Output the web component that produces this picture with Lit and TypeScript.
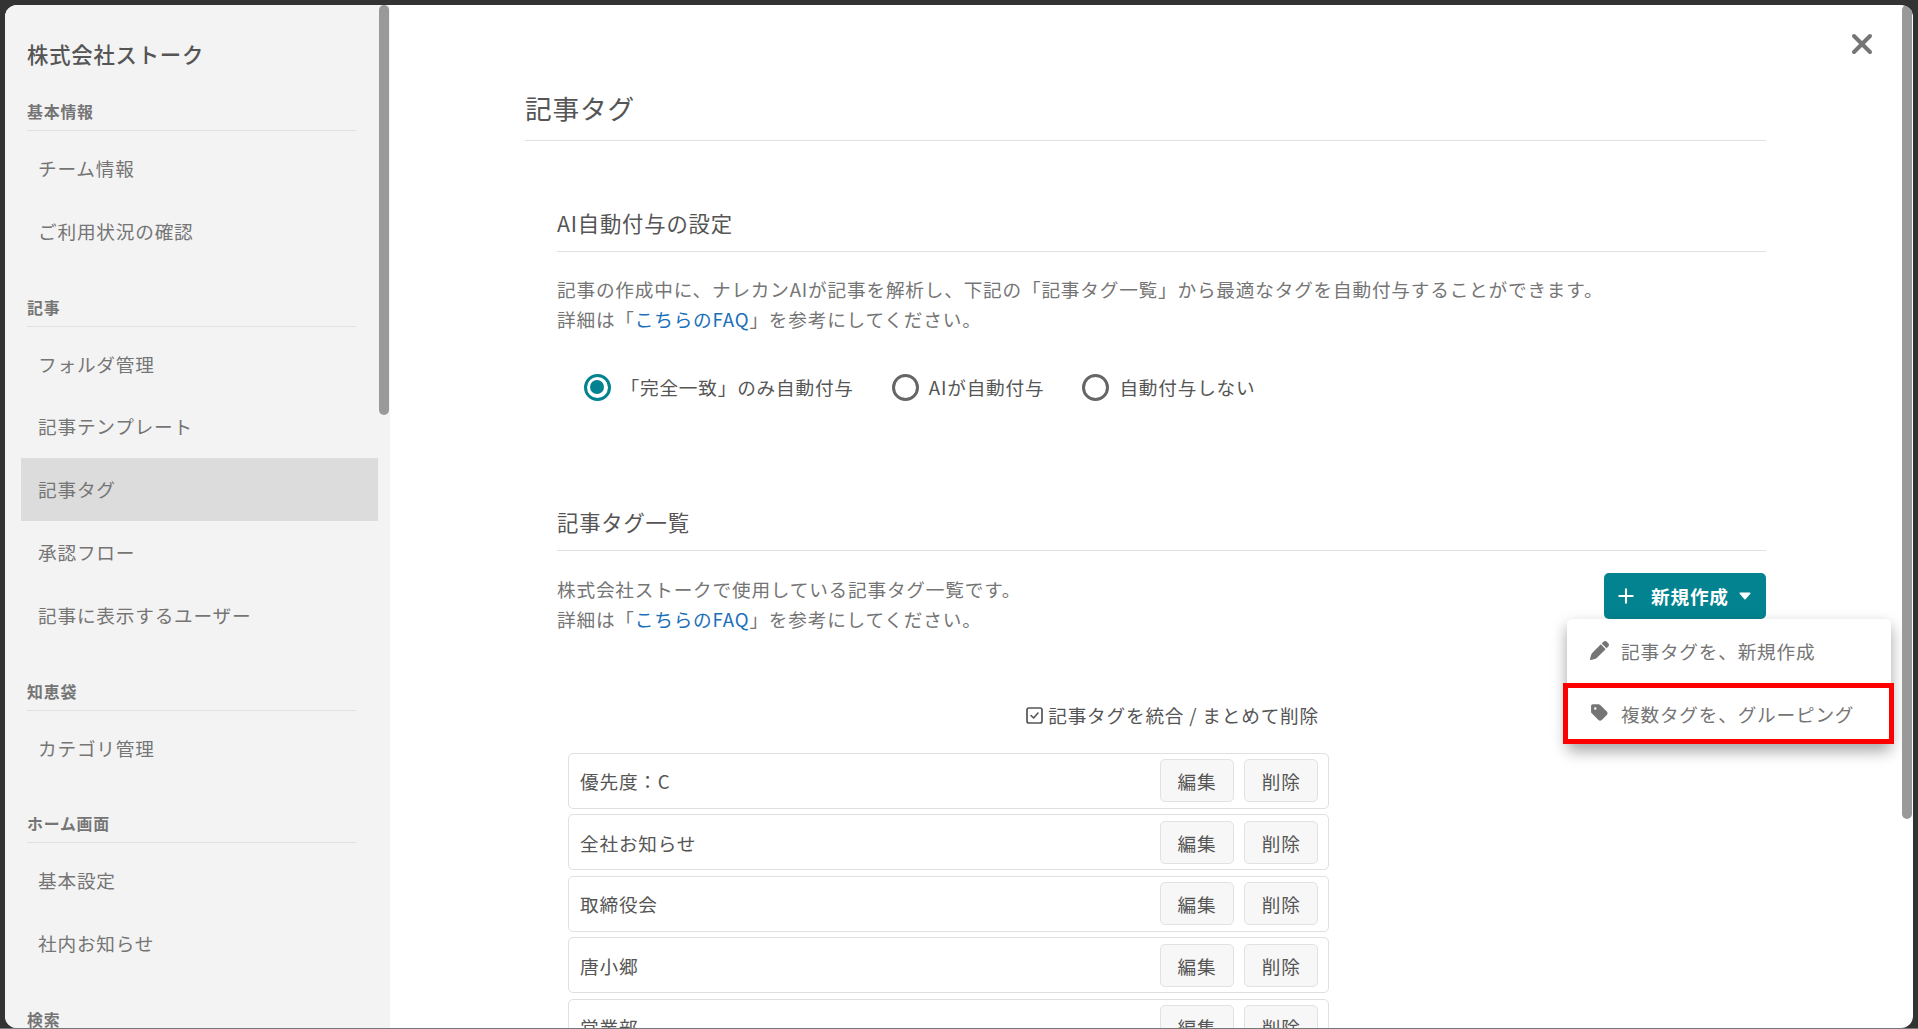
import { LitElement, html, css } from "lit";
import { customElement, property } from "lit/decorators.js";
import { classMap } from "lit/directives/class-map.js";

const NAV = [
  { title: "基本情報", items: ["チーム情報", "ご利用状況の確認"] },
  {
    title: "記事",
    items: ["フォルダ管理", "記事テンプレート", "記事タグ", "承認フロー", "記事に表示するユーザー"],
  },
  { title: "知恵袋", items: ["カテゴリ管理"] },
  { title: "ホーム画面", items: ["基本設定", "社内お知らせ"] },
  { title: "検索", items: [] as string[] },
];

const TAGS = ["優先度：C", "全社お知らせ", "取締役会", "唐小郷", "営業部"];
const RADIOS = ["「完全一致」のみ自動付与", "AIが自動付与", "自動付与しない"];

@customElement("side-nav")
export class SideNav extends LitElement {
  @property() current = "";

  static styles = css`
    :host {
      display: block;
      position: relative;
      flex: 0 0 385px;
      box-sizing: border-box;
      background: #f3f3f3;
      color: #757575;
      overflow: hidden;
    }
    .company {
      margin: 30px 0 0 22px;
      font-size: 21.35px;
      line-height: 38px;
      font-weight: 500;
      color: #555;
    }
    .group {
      margin-top: 32px;
    }
    .group.first {
      margin-top: 26px;
    }
    .group-title {
      margin: 0 34px 6px 22px;
      padding-bottom: 6px;
      border-bottom: 1px solid #e0e0e0;
      font-size: 15.9px;
      line-height: 25px;
      font-weight: 700;
    }
    .item {
      height: 62.8px;
      margin: 0 12px 0 16px;
      padding-left: 17px;
      box-sizing: border-box;
      font-size: 18.65px;
      line-height: 62px;
    }
    .item.active {
      background: #dcdcdc;
    }
    .thumb {
      position: absolute;
      top: 0;
      right: 1px;
      width: 10px;
      height: 410px;
      border-radius: 5px;
      background: #999;
    }
  `;

  render() {
    return html`
      <div class="company">株式会社ストーク</div>
      ${NAV.map(
        (g, i) => html`
          <div class=${classMap({ group: true, first: i === 0 })}>
            <div class="group-title">${g.title}</div>
            ${g.items.map(
              (t) => html`<div class=${classMap({ item: true, active: t === this.current })}>${t}</div>`
            )}
          </div>
        `
      )}
      <div class="thumb"></div>
    `;
  }
}

@customElement("create-menu")
export class CreateMenu extends LitElement {
  static styles = css`
    :host {
      display: block;
      position: relative;
      flex: none;
    }
    .button {
      display: flex;
      align-items: center;
      width: 162px;
      height: 46px;
      padding-left: 14px;
      box-sizing: border-box;
      border-radius: 5px;
      background: #02838f;
      color: #fff;
      font-size: 18.65px;
      font-weight: 700;
      line-height: 44px;
    }
    .plus {
      width: 16px;
      height: 16px;
      margin-right: 17px;
    }
    .caret {
      width: 12px;
      height: 8px;
      margin: 0 0 0 10px;
    }
    .menu {
      position: absolute;
      top: 46px;
      left: -37px;
      width: 324px;
      height: 125px;
      border-radius: 5px;
      background: #fff;
      box-shadow: 0 7px 15px rgba(0, 0, 0, 0.36);
      color: #757575;
      font-size: 18.65px;
    }
    .entry {
      display: flex;
      align-items: center;
      height: 63px;
      padding-left: 23px;
    }
    .icon {
      display: flex;
      width: 20px;
      margin-right: 11px;
    }
    .pen {
      width: 19px;
      height: 19px;
    }
    .tag {
      width: 17px;
      height: 19.3px;
      margin: 0 0 2px 1px;
    }
    .highlight {
      position: absolute;
      left: -4px;
      top: 64px;
      width: 331px;
      height: 61px;
      box-sizing: border-box;
      border: 5.5px solid #f00;
    }
  `;

  render() {
    return html`
      <div class="button">
        <svg class="plus" viewBox="0 0 16 16">
          <path d="M8 1.300V14.700M1.300 8H14.700" stroke="#fff" stroke-width="2.100" stroke-linecap="round" />
        </svg>
        <span>新規作成</span>
        <svg class="caret" viewBox="0 0 12 8">
          <path d="M1.300 1.200H10.700L6 6.600Z" fill="#fff" stroke="#fff" stroke-width="1.600" stroke-linejoin="round" />
        </svg>
      </div>
      <div class="menu">
        <div class="entry">
          <span class="icon">
            <svg class="pen" viewBox="0 0 512 512" fill="currentColor">
              <path
                d="M410.3 231l11.3-11.3-33.9-33.9-62.1-62.1L291.7 89.8l-11.3 11.3-22.6 22.6L58.6 322.9c-10.4 10.4-18 23.3-22.2 37.4L1 480.7c-2.5 8.4-.2 17.5 6.1 23.7s15.3 8.5 23.7 6.1l120.300-35.400c14.100-4.200 27-11.800 37.400-22.200L387.700 253.700 410.300 231z"
              />
              <path
                d="M362.700 18.700L348.300 33.200 325.700 55.800 314.300 67.100l33.900 33.900 62.100 62.100 33.900 33.900 11.300-11.300 22.600-22.600 14.500-14.500c25-25 25-65.500 0-90.500L453.300 18.700c-25-25-65.500-25-90.500 0z"
              />
            </svg>
          </span>
          <span>記事タグを、新規作成</span>
        </div>
        <div class="entry">
          <span class="icon">
            <svg class="tag" viewBox="0 0 448 512" fill="currentColor">
              <path
                d="M0 80V229.500c0 17 6.700 33.300 18.700 45.300l176 176c25 25 65.500 25 90.500 0L418.700 317.300c25-25 25-65.500 0-90.500l-176-176c-12-12-28.300-18.700-45.300-18.700H48C21.500 32 0 53.500 0 80zm112 32a32 32 0 1 1 0 64 32 32 0 1 1 0-64z"
              />
            </svg>
          </span>
          <span>複数タグを、グルーピング</span>
        </div>
        <div class="highlight"></div>
      </div>
    `;
  }
}

@customElement("app-root")
export class AppRoot extends LitElement {
  static styles = css`
    :host {
      display: block;
      width: 1918px;
      height: 1029px;
      box-sizing: border-box;
      padding: 5px 5px 0;
      background: #333;
      border-bottom: 1px solid #777;
      overflow: hidden;
      font-family: "Noto Sans CJK JP", sans-serif;
      letter-spacing: 0.05em;
      white-space: nowrap;
    }
    .modal {
      display: flex;
      height: 1023px;
      border-radius: 12px;
      overflow: hidden;
      background: #fff;
    }
    main {
      position: relative;
      flex: 1;
      min-width: 0;
      padding: 80px 147px 0 135px;
      color: #555;
    }
    .page-title {
      margin: 0;
      padding-bottom: 10px;
      border-bottom: 1px solid #e0e0e0;
      font-size: 26.7px;
      font-weight: 400;
      line-height: 45px;
    }
    section {
      margin-left: 32px;
    }
    .auto {
      height: 299px;
      padding-top: 64px;
    }
    h2 {
      margin: 0;
      padding-bottom: 10px;
      border-bottom: 1px solid #e0e0e0;
      font-size: 21.35px;
      font-weight: 400;
      line-height: 36px;
    }
    .desc {
      margin: 0;
      font-size: 18.65px;
      line-height: 30px;
      color: #757575;
    }
    .auto .desc {
      margin-top: 22px;
    }
    a {
      color: #1a6fba;
    }
    .radios {
      display: flex;
      gap: 38px;
      margin: 38px 0 0 26.5px;
    }
    .radio {
      display: flex;
      align-items: center;
      gap: 10px;
      height: 30px;
      font-size: 18.65px;
      line-height: 30px;
    }
    .ring {
      width: 27px;
      height: 27px;
      box-sizing: border-box;
      border: 3px solid #666;
      border-radius: 50%;
      display: grid;
      place-items: center;
    }
    .ring.on {
      border-color: #02838f;
    }
    .ring.on::after {
      content: "";
      width: 14px;
      height: 14px;
      border-radius: 50%;
      background: #02838f;
    }
    .intro {
      display: flex;
      justify-content: space-between;
      align-items: flex-start;
      margin-top: 22px;
    }
    .intro .desc {
      padding-top: 1px;
    }
    .list {
      width: 761px;
      margin: 66px 0 0 11px;
    }
    .bulk {
      display: flex;
      justify-content: flex-end;
      align-items: center;
      gap: 5px;
      height: 30px;
      margin: 0 10px 22.5px 0;
      font-size: 18.65px;
      line-height: 28px;
    }
    .bulk svg {
      width: 17px;
      height: 17px;
    }
    .row {
      display: flex;
      align-items: center;
      gap: 10.7px;
      height: 56px;
      margin-bottom: 5.5px;
      padding: 0 10px 0 11px;
      box-sizing: border-box;
      border: 1px solid #e0e0e0;
      border-radius: 5px;
      font-size: 18.65px;
    }
    .name {
      flex: 1;
    }
    .act {
      width: 73.6px;
      height: 43px;
      box-sizing: border-box;
      border: 1px solid #e2e2e2;
      border-radius: 5px;
      background: #f7f7f7;
      text-align: center;
      line-height: 41px;
    }
    .close {
      position: absolute;
      top: 28px;
      right: 40px;
      width: 22px;
      height: 22px;
    }
    .thumb {
      position: absolute;
      top: 0;
      right: 1px;
      width: 10px;
      height: 814px;
      border-radius: 5px;
      background: #999;
    }
  `;

  render() {
    const faq = html`詳細は「<a>こちらのFAQ</a>」を参考にしてください。`;
    return html`
      <div class="modal">
        <side-nav current="記事タグ"></side-nav>
        <main>
          <h1 class="page-title">記事タグ</h1>
          <section class="auto">
            <h2>AI自動付与の設定</h2>
            <p class="desc">
              記事の作成中に、ナレカンAIが記事を解析し、下記の「記事タグ一覧」から最適なタグを自動付与することができます。<br />${faq}
            </p>
            <div class="radios">
              ${RADIOS.map(
                (t, i) => html`<div class="radio">
                  <span class=${classMap({ ring: true, on: i === 0 })}></span><span>${t}</span>
                </div>`
              )}
            </div>
          </section>
          <section>
            <h2>記事タグ一覧</h2>
            <div class="intro">
              <p class="desc">株式会社ストークで使用している記事タグ一覧です。<br />${faq}</p>
              <create-menu></create-menu>
            </div>
            <div class="list">
              <div class="bulk">
                <svg viewBox="0 0 17 17" fill="none" stroke="#555" stroke-linecap="round" stroke-linejoin="round">
                  <rect x="1" y="1" width="15" height="15" rx="2" stroke-width="1.700" />
                  <path d="M5 8.500 7.600 11 12 6" stroke-width="1.600" />
                </svg>
                <span>記事タグを統合 / まとめて削除</span>
              </div>
              ${TAGS.map(
                (t) => html`<div class="row">
                  <span class="name">${t}</span><span class="act">編集</span><span class="act">削除</span>
                </div>`
              )}
            </div>
          </section>
          <svg class="close" viewBox="0 0 22 22">
            <path d="M3 3 19 19M19 3 3 19" stroke="#757575" stroke-width="4" stroke-linecap="round" />
          </svg>
          <div class="thumb"></div>
        </main>
      </div>
    `;
  }
}
